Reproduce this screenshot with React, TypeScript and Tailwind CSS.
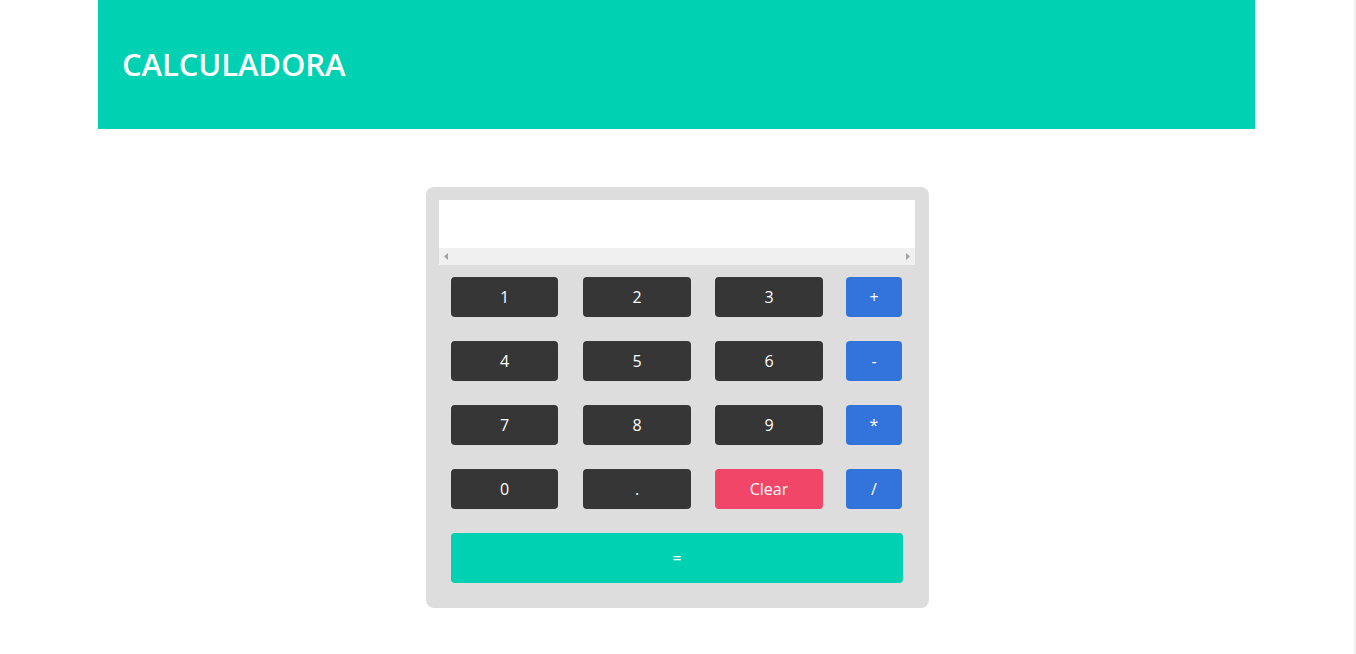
const digitRows = [
  ['1', '2', '3', '+'],
  ['4', '5', '6', '-'],
  ['7', '8', '9', '*'],
  ['0', '.', 'Clear', '/'],
];

function Key({ label, col }: { label: string; col: number }) {
  const isOp = col === 3;
  const isClear = label === 'Clear';
  const width = col === 0 ? 'w-[107px]' : isOp ? 'w-[56px]' : 'w-[108px]';
  const color = isClear ? 'bg-[#f14668]' : isOp ? 'bg-[#3273dc]' : 'bg-[#363636]';
  return (
    <button className={`${width} ${color} h-10 rounded-[4px] text-white text-base flex items-center justify-center`}>
      {label}
    </button>
  );
}

export default function App() {
  return (
    <div className="flex min-h-[654px] bg-white" style={{ fontFamily: '"Open Sans", "Noto Sans", sans-serif' }}>
      <div className="w-[1354px]">
        {/* Header */}
        <header className="w-[1157px] ml-[98px] h-[129px] bg-[#00d1b2] flex items-center pl-[24px]">
          <h1 className="text-white text-[31px] font-semibold tracking-[-0.1px]">CALCULADORA</h1>
        </header>

        {/* Calculator */}
        <div className="flex pl-[426px] pt-[58px]">
          <div className="w-[503px] bg-[#dddddd] rounded-[8px] p-[13px] pb-[25px]">
            <div className="bg-white w-[476px] h-[65px] flex flex-col">
              <div className="flex-1" />
              <div className="h-[17px] bg-[#f0f0f0] flex items-center justify-between px-[5px]">
                <svg width="5" height="7" viewBox="0 0 5 7"><path d="M4 0 L0 3.5 L4 7 Z" fill="#a3a3a3" /></svg>
                <svg width="5" height="7" viewBox="0 0 5 7"><path d="M1 0 L5 3.5 L1 7 Z" fill="#a3a3a3" /></svg>
              </div>
            </div>

            <div className="px-[12px] pt-[12px] flex flex-col gap-[24px]">
              {digitRows.map((row, r) => (
                <div key={r} className="grid grid-cols-[132px_132px_131px_57px]">
                  {row.map((label, c) => (
                    <Key key={label} label={label} col={c} />
                  ))}
                </div>
              ))}
              <button className="w-[452px] h-[50px] bg-[#00d1b2] rounded-[4px] text-white text-base">=</button>
            </div>
          </div>
        </div>
      </div>
      <div className="w-[2px] bg-[#f0f0f0]" />
    </div>
  );
}
